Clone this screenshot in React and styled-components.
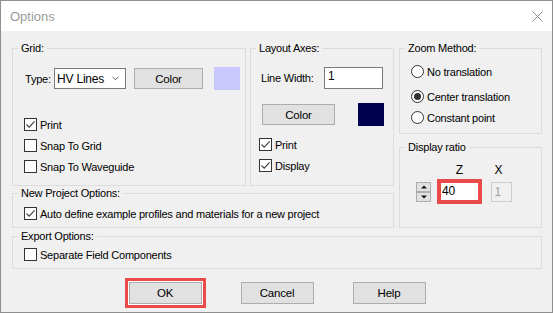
import React from 'react'
import styled, { createGlobalStyle } from 'styled-components'

const GlobalStyle = createGlobalStyle`
  html, body {
    margin: 0;
    padding: 0;
    background: #f0f0f0;
  }
  body {
    font-family: "Liberation Sans", Arial, sans-serif;
  }
`

const Window = styled.div`
  width: 553px;
  height: 313px;
  box-sizing: border-box;
  border: 1px solid #8e8e8e;
  display: flex;
  flex-direction: column;
  background: #f0f0f0;
  font-family: "Liberation Sans", Arial, sans-serif;
  font-size: 11px;
  letter-spacing: -0.22px;
  color: #000;
  overflow: hidden;
`

const TitleBar = styled.div`
  height: 30px;
  flex: none;
  background: #fff;
  display: flex;
  align-items: center;
  justify-content: space-between;
  padding: 0 9px 0 9px;
`

const Title = styled.span`
  font-size: 13px;
  letter-spacing: 0;
  color: #9a9a9a;
`

const Body = styled.div`
  flex: 1;
  padding: 17px 10px 0 11px;
  display: flex;
  flex-direction: column;
`

const Top = styled.div`
  display: flex;
  gap: 5px;
`

const Column = styled.div`
  width: ${p => p.$w}px;
  display: flex;
  flex-direction: column;
  gap: ${p => p.$gap}px;
`

const Row = styled.div`
  display: flex;
  gap: ${p => p.$gap || 0}px;
`

const Group = styled.div`
  position: relative;
  box-sizing: border-box;
  width: ${p => (p.$w ? p.$w + 'px' : 'auto')};
  height: ${p => p.$h}px;
  margin-top: ${p => p.$mt || 0}px;
  border: 1px solid #dcdcdc;
  padding: ${p => p.$pad};
`

const Caption = styled.span`
  position: absolute;
  top: -7px;
  left: 5px;
  padding: 0 3px;
  background: #f0f0f0;
  line-height: 13px;
  white-space: nowrap;
`

const FieldRow = styled.div`
  display: flex;
  align-items: center;
  height: ${p => p.$h}px;
  margin-top: ${p => p.$mt || 0}px;
  margin-left: ${p => p.$ml || 0}px;
`

const FieldLabel = styled.span`
  width: ${p => p.$w}px;
  flex: none;
  white-space: nowrap;
`

const Select = styled.div`
  box-sizing: border-box;
  width: 72px;
  height: 21px;
  margin-right: 8px;
  background: #fff;
  border: 1px solid #7a7a7a;
  display: flex;
  align-items: center;
  justify-content: space-between;
  padding: 0 6px 0 2px;
  font-size: 12px;
  letter-spacing: -0.2px;
`

const Button = styled.button`
  box-sizing: border-box;
  width: ${p => p.$w}px;
  height: ${p => p.$h || 21}px;
  margin-right: ${p => p.$mr || 0}px;
  padding: 0;
  background: #e1e1e1;
  border: 1px solid #adadad;
  font-family: inherit;
  font-size: 11.5px;
  letter-spacing: -0.2px;
  color: #000;
  box-shadow: ${p => (p.$highlight ? '0 0 0 1px #fff, 0 0 0 4px #e94b4b' : 'none')};
`

const Swatch = styled.div`
  width: 26px;
  height: 23px;
  flex: none;
  background: ${p => p.$color};
`

const TextInput = styled.div`
  box-sizing: border-box;
  width: ${p => p.$w}px;
  height: ${p => p.$h}px;
  background: ${p => (p.$disabled ? '#f0f0f0' : '#fff')};
  border: ${p =>
    p.$highlight ? '4px solid #e94b4b' : p.$disabled ? '1px solid #cccccc' : '1px solid #7a7a7a'};
  color: ${p => (p.$disabled ? '#a0a0a0' : '#000')};
  font-size: 12px;
  line-height: ${p => p.$lh || 15}px;
  padding: ${p => p.$pad || '1px 3px'};
`

const List = styled.div`
  display: flex;
  flex-direction: column;
  margin-top: ${p => p.$mt || 0}px;
  margin-left: ${p => p.$ml || 0}px;
`

const OptionRow = styled.label`
  display: flex;
  align-items: center;
  gap: 3px;
  height: 21px;
  margin-top: ${p => p.$mt || 0}px;
  white-space: nowrap;
`

const CheckBox = styled.span`
  box-sizing: border-box;
  width: 13px;
  height: 13px;
  flex: none;
  background: #fff;
  border: 1px solid #333;
  display: flex;
  align-items: center;
  justify-content: center;
`

const RadioCircle = styled.span`
  box-sizing: border-box;
  width: 13px;
  height: 13px;
  flex: none;
  border-radius: 50%;
  background: #fff;
  border: 1px solid #333;
  display: flex;
  align-items: center;
  justify-content: center;
  &::after {
    content: '';
    width: 7px;
    height: 7px;
    border-radius: 50%;
    background: ${p => (p.$on ? '#333' : 'transparent')};
  }
`

const RatioGrid = styled.div`
  display: grid;
  grid-template-columns: 15px 45px 21px;
  grid-template-rows: 13px 25px;
  column-gap: 6px;
  row-gap: 2px;
  align-items: center;
  justify-items: center;
  & > :nth-child(1) { grid-column: 2; }
  & > :nth-child(2) { grid-column: 3; }
  & > :nth-child(3) { grid-column: 1; }
  & > :nth-child(5) { margin-left: 5px; }
`

const AxisLabel = styled.span`
  font-size: 12px;
  line-height: 13px;
  letter-spacing: 0;
`

const Spinner = styled.div`
  display: flex;
  flex-direction: column;
  width: 15px;
`

const SpinButton = styled.div`
  box-sizing: border-box;
  height: 10px;
  background: #e1e1e1;
  border: 1px solid #adadad;
  display: flex;
  align-items: center;
  justify-content: center;
`

const Buttons = styled.div`
  display: flex;
  justify-content: center;
  gap: 39px;
  margin-top: 13px;
`

const Check = ({ checked, children }) => (
  <OptionRow>
    <CheckBox>
      {checked && (
        <svg width="11" height="11" viewBox="0 0 11 11">
          <path d="M1.5 5.5 L4.2 8.2 L9.6 2.4" fill="none" stroke="#444" strokeWidth="1.2" />
        </svg>
      )}
    </CheckBox>
    {children}
  </OptionRow>
)

const Radio = ({ on, mt, children }) => (
  <OptionRow $mt={mt}>
    <RadioCircle $on={on} />
    {children}
  </OptionRow>
)

const Triangle = ({ up }) => (
  <svg width="6" height="4" viewBox="0 0 6 4">
    <path d={up ? 'M0 3.5 L3 0.5 L6 3.5 Z' : 'M0 0.5 L3 3.5 L6 0.5 Z'} fill="#111" />
  </svg>
)

const App = () => {
  return (
    <>
      <GlobalStyle />
      <Window>
        <TitleBar>
          <Title>Options</Title>
          <svg width="11" height="11" viewBox="0 0 11 11">
            <path d="M0.5 0.5 L10.5 10.5 M10.5 0.5 L0.5 10.5" stroke="#8a8a8a" strokeWidth="1" />
          </svg>
        </TitleBar>
        <Body>
          <Top>
            <Column $w={382} $gap={7}>
              <Row $gap={4}>
                <Group $w={234} $h={138} $pad="18px 0 0 11px">
                  <Caption>Grid:</Caption>
                  <FieldRow $h={23} $ml={1}>
                    <FieldLabel $w={29}>Type:</FieldLabel>
                    <Select>
                      <span>HV Lines</span>
                      <svg width="7" height="5" viewBox="0 0 7 5">
                        <path d="M0.5 0.8 L3.5 3.8 L6.5 0.8" fill="none" stroke="#606060" strokeWidth="1" />
                      </svg>
                    </Select>
                    <Button $w={69} $mr={11}>Color</Button>
                    <Swatch $color="#c8c8ff" />
                  </FieldRow>
                  <List $mt={24}>
                    <Check checked>Print</Check>
                    <Check>Snap To Grid</Check>
                    <Check>Snap To Waveguide</Check>
                  </List>
                </Group>
                <Group $w={144} $h={138} $pad="18px 0 0 8px">
                  <Caption>Layout Axes:</Caption>
                  <FieldRow $h={22} $ml={2}>
                    <FieldLabel $w={63}>Line Width:</FieldLabel>
                    <TextInput $w={59} $h={22}>1</TextInput>
                  </FieldRow>
                  <FieldRow $h={23} $mt={14} $ml={3}>
                    <Button $w={73} $mr={23}>Color</Button>
                    <Swatch $color="#000050" />
                  </FieldRow>
                  <List $mt={8}>
                    <Check checked>Print</Check>
                    <Check checked>Display</Check>
                  </List>
                </Group>
              </Row>
              <Group $h={35} $pad="9px 0 0 11px">
                <Caption>New Project Options:</Caption>
                <Check checked>Auto define example profiles and materials for a new project</Check>
              </Group>
            </Column>
            <Column $w={143} $gap={13}>
              <Group $h={86} $pad="12px 0 0 11px">
                <Caption>Zoom Method:</Caption>
                <List>
                  <Radio>No translation</Radio>
                  <Radio on mt={4}>Center translation</Radio>
                  <Radio>Constant point</Radio>
                </List>
              </Group>
              <Group $h={81} $pad="16px 0 0 16px">
                <Caption>Display ratio</Caption>
                <RatioGrid>
                  <AxisLabel>Z</AxisLabel>
                  <AxisLabel>X</AxisLabel>
                  <Spinner>
                    <SpinButton><Triangle up /></SpinButton>
                    <SpinButton><Triangle /></SpinButton>
                  </Spinner>
                  <TextInput $w={45} $h={25} $highlight $pad="0 1px" $lh={17}>40</TextInput>
                  <TextInput $w={21} $h={20} $disabled $pad="1px 3px" $lh={16}>1</TextInput>
                </RatioGrid>
              </Group>
            </Column>
          </Top>
          <Group $h={33} $mt={8} $pad="7px 0 0 11px">
            <Caption>Export Options:</Caption>
            <Check>Separate Field Components</Check>
          </Group>
          <Buttons>
            <Button $w={73} $h={22} $highlight>OK</Button>
            <Button $w={73} $h={22}>Cancel</Button>
            <Button $w={73} $h={22}>Help</Button>
          </Buttons>
        </Body>
      </Window>
    </>
  )
}

export default App
